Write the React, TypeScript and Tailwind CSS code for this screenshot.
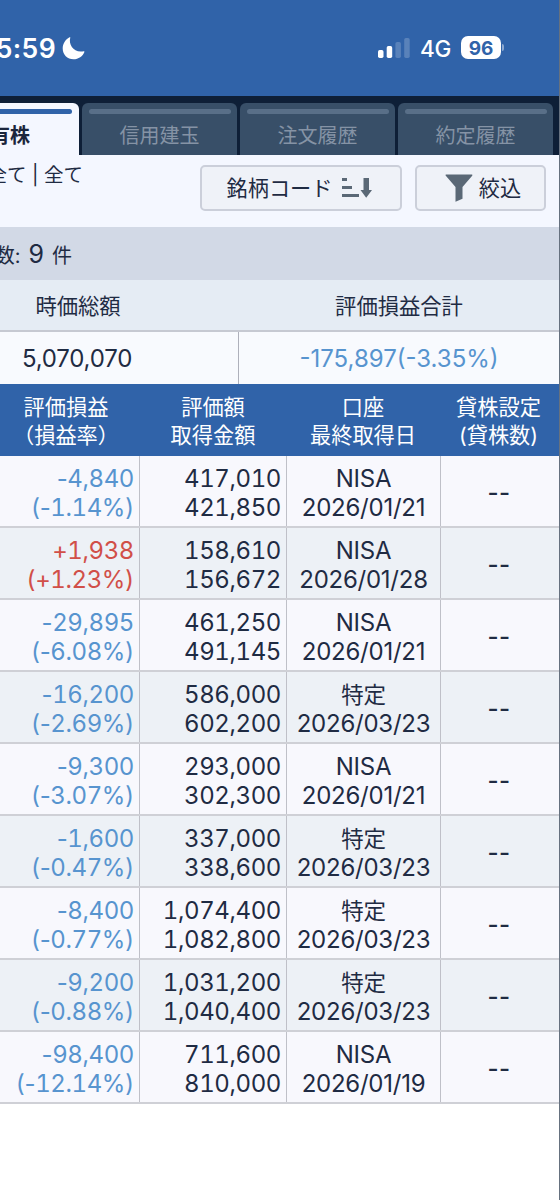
type Holding = {
  gain: string
  rate: string
  value: string
  cost: string
  account: string
  date: string
}

const HOLDINGS: Holding[] = [
  { gain: '-4,840', rate: '(-1.14%)', value: '417,010', cost: '421,850', account: 'NISA', date: '2026/01/21' },
  { gain: '+1,938', rate: '(+1.23%)', value: '158,610', cost: '156,672', account: 'NISA', date: '2026/01/28' },
  { gain: '-29,895', rate: '(-6.08%)', value: '461,250', cost: '491,145', account: 'NISA', date: '2026/01/21' },
  { gain: '-16,200', rate: '(-2.69%)', value: '586,000', cost: '602,200', account: '特定', date: '2026/03/23' },
  { gain: '-9,300', rate: '(-3.07%)', value: '293,000', cost: '302,300', account: 'NISA', date: '2026/01/21' },
  { gain: '-1,600', rate: '(-0.47%)', value: '337,000', cost: '338,600', account: '特定', date: '2026/03/23' },
  { gain: '-8,400', rate: '(-0.77%)', value: '1,074,400', cost: '1,082,800', account: '特定', date: '2026/03/23' },
  { gain: '-9,200', rate: '(-0.88%)', value: '1,031,200', cost: '1,040,400', account: '特定', date: '2026/03/23' },
  { gain: '-98,400', rate: '(-12.14%)', value: '711,600', cost: '810,000', account: 'NISA', date: '2026/01/19' },
]

const TABS = ['信用建玉', '注文履歴', '約定履歴']

const COLUMNS = 'grid grid-cols-[140px_147px_154px_118px]'

function StatusBar() {
  return (
    <div className="flex h-24 items-start justify-between bg-[#3063a9] text-white">
      <div className="flex pt-[34px]">
        <div className="flex w-[56px] justify-end overflow-hidden text-[26.500px] leading-[29px] font-semibold tracking-[0.4px] whitespace-nowrap">
          5:59
        </div>
        <svg width="23" height="23" viewBox="0 0 23 23" className="mt-[3px] ml-[6px]" fill="currentColor">
          <path d="M8.3.5C6.2 7.8 12 16.3 21.8 14.2c.5-.1.8.3.6.8C20.800 19.300 16.500 22.300 11.500 22.300 5.300 22.300.7 17.700.7 11.600.7 6.700 3.400 2.500 7.500.3c.5-.3.9-.2.8.2Z" />
        </svg>
      </div>
      <div className="flex pt-[35px] pr-[58px]">
        <svg width="32" height="21" viewBox="0 0 32 21" className="mt-[2px]" fill="currentColor">
          <rect x="0" y="13" width="5.500" height="8" rx="1.700" />
          <rect x="8.700" y="9" width="5.500" height="12" rx="1.700" />
          <rect x="17.400" y="5" width="5.500" height="16" rx="1.700" opacity=".2" />
          <rect x="26.200" y="1" width="5.500" height="20" rx="1.700" opacity=".2" />
        </svg>
        <div className="ml-[10px] w-[32px] text-[22.500px] leading-[27px] font-medium tracking-[-0.3px]">4G</div>
        <div className="mt-[1px] ml-[9px] flex h-[23px] w-[40px] items-center justify-center rounded-[7px] bg-white pt-[2px] text-[19px] leading-[22px] font-bold text-[#3063a9]">
          96
        </div>
        <div className="mt-[9px] -mr-[3px] ml-[1px] h-[7px] w-[2px] rounded-r-full bg-[#8da9d0]" />
      </div>
    </div>
  )
}

function TabBar() {
  return (
    <div className="flex h-[59px] items-end bg-[#0e1f37]">
      <div className="flex h-[52px] w-[79px] flex-col items-start rounded-tr-[6px] bg-[#f4f7ff]">
        <div className="mt-[6px] h-[5px] w-[72px] rounded-r-full bg-[#3063a9]" />
        <div className="mt-[8px] flex w-[30px] justify-end overflow-hidden text-[20px] leading-[28px] font-bold whitespace-nowrap text-[#1b263c]">
          有株
        </div>
      </div>
      <div className="ml-[3px] flex gap-[3px]">
        {TABS.map((tab) => (
          <div key={tab} className="flex h-[52px] w-[155px] flex-col items-center rounded-t-[6px] bg-[#384f68]">
            <div className="mt-[6px] h-[5px] w-[142px] rounded-full bg-[#596f88]" />
            <div className="mt-[8px] text-[20px] leading-[28px] text-[#8593a5]">{tab}</div>
          </div>
        ))}
      </div>
    </div>
  )
}

function SortIcon() {
  return (
    <svg width="30" height="22" viewBox="0 0 30 22" fill="#5a6876">
      <rect x="0" y="1" width="5" height="3" />
      <rect x="0" y="9" width="10" height="3" />
      <rect x="0" y="17" width="17" height="3" />
      <path d="M21.500 1h5.500v12h3L24.200 20.700 18.500 13H21.500Z" />
    </svg>
  )
}

function FilterIcon() {
  return (
    <svg width="28" height="28" viewBox="0 0 28 28" fill="#5a6876">
      <path d="M1.300.5h25.400c.7 0 .9.7.5 1.300L17.500 13v11.800l-7 3V13L.8 1.800C.3 1.200.5.5 1.300.5Z" />
    </svg>
  )
}

function Toolbar() {
  return (
    <div className="flex h-[72px] items-start bg-[#f4f7ff] text-[#1f2b43]">
      <div className="mt-[6px] flex w-[83px] justify-end overflow-hidden text-[19.500px] leading-[28px] whitespace-nowrap">
        全て | 全て
      </div>
      <button className="mt-[10px] ml-[117px] flex h-[46px] w-[202px] items-center justify-center gap-[10px] rounded-[5px] border-2 border-[#cbcfda] bg-[#eff2f8] pr-[3px]">
        <span className="text-[21.200px] leading-[28px]">銘柄コード</span>
        <SortIcon />
      </button>
      <button className="mt-[10px] ml-[13px] flex h-[46px] w-[131px] items-center justify-center gap-[6px] rounded-[5px] border-2 border-[#cbcfda] bg-[#eff2f8] pl-[5px]">
        <FilterIcon />
        <span className="text-[21.200px] leading-[28px]">絞込</span>
      </button>
    </div>
  )
}

function Summary() {
  return (
    <>
      <div className="flex h-[53px] items-center bg-[#d2d9e6]">
        <div className="flex w-[72px] items-baseline justify-end overflow-hidden pt-[2px] text-[20px] whitespace-nowrap">
          数:<span className="mx-[8px] text-[25px]">9</span>件
        </div>
      </div>
      <div className="grid h-[52px] grid-cols-[239px_320px] items-center border-b-2 border-[#c6c9d2] bg-[#e5ecf4] pt-[3px] text-center text-[21.300px]">
        <div className="-ml-[83px]">時価総額</div>
        <div>評価損益合計</div>
      </div>
      <div className="grid h-[52px] grid-cols-[239px_320px] bg-[#f8fafe] text-center text-[24px] leading-[50px]">
        <div className="border-r border-[#aeb0bb] pt-[2px] pr-[84px] tracking-[-0.2px]">5,070,070</div>
        <div className="pt-[2px] text-[#5794cf]">-175,897(-3.35%)</div>
      </div>
    </>
  )
}

// tabular figures also widen the hyphen, so the minus sign keeps its own width
function Amount({ text }: { text: string }) {
  const at = text.indexOf('-')
  if (at < 0) return <div>{text}</div>
  return (
    <div>
      {text.slice(0, at)}
      <span className="normal-nums">-</span>
      {text.slice(at + 1)}
    </div>
  )
}

function HoldingsTable() {
  return (
    <div>
      <div
        className={`${COLUMNS} h-[72px] bg-[#3063a9] pt-[10px] text-center text-[21.200px] leading-[27.500px] text-white`}
      >
        <div className="pr-[8px]">
          評価損益
          <br />
          （損益率）
        </div>
        <div className="pr-px">
          評価額
          <br />
          取得金額
        </div>
        <div className="pr-[2px]">
          口座
          <br />
          最終取得日
        </div>
        <div className="pr-[3px]">
          貸株設定
          <br />
          (貸株数)
        </div>
      </div>
      {HOLDINGS.map((row, i) => (
        <div
          key={i}
          className={`${COLUMNS} h-[72px] border-b-2 border-[#cfd0d6] text-[24px] leading-[29px] ${i % 2 ? 'bg-[#edf1f6]' : 'bg-[#f8f8fd]'}`}
        >
          <div
            className={`border-r border-[#bfc0c8] pt-[8px] pr-[5px] text-right tracking-[-0.4px] tabular-nums ${row.gain.startsWith('+') ? 'text-[#d14f48]' : 'text-[#5794cf]'}`}
          >
            <Amount text={row.gain} />
            <Amount text={row.rate} />
          </div>
          <div className="border-r border-[#bfc0c8] pt-[8px] pr-[5px] text-right tracking-[-0.4px] tabular-nums">
            <div>{row.value}</div>
            <div>{row.cost}</div>
          </div>
          <div className="border-r border-[#bfc0c8] pt-[8px] text-center tracking-[-0.25px] whitespace-nowrap">
            <div className={row.account === '特定' ? 'text-[22.500px]' : ''}>{row.account}</div>
            <div>{row.date}</div>
          </div>
          <div className="flex items-center justify-center pt-[2px] pr-[2px] font-medium tracking-[0.5px]">--</div>
        </div>
      ))}
    </div>
  )
}

export default function App() {
  return (
    <div className="h-[1200px] w-[560px] overflow-hidden border-r border-[#66717f] bg-white font-['Inter','Noto_Sans_CJK_JP',sans-serif] text-[#1f2b43]">
      <StatusBar />
      <TabBar />
      <Toolbar />
      <Summary />
      <HoldingsTable />
    </div>
  )
}
